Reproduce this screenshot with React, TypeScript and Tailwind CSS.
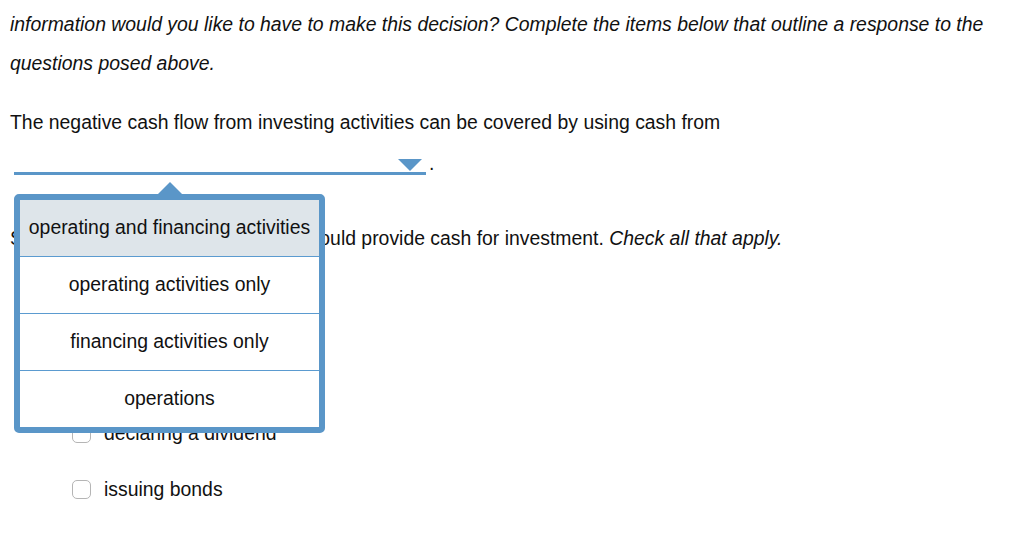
import React from "react";

const options = [
  "operating and financing activities",
  "operating activities only",
  "financing activities only",
  "operations",
];

const choices = ["issuing stock", "selling investments", "declaring a dividend", "issuing bonds"];

export default function App() {
  return (
    <div className="min-h-[546px] w-[1024px] bg-white pl-[10px] pt-[5px] text-[19.4px] text-[#111] [font-family:'Liberation_Sans',Arial,sans-serif]">
      <p className="leading-[39px] italic">
        information would you like to have to make this decision? Complete the items below that outline a response to the
        questions posed above.
      </p>

      <p className="mt-[20px] leading-[39px]">
        The negative cash flow from investing activities can be covered by using cash from
      </p>

      {/* dropdown */}
      <div className="relative mt-[4px] flex items-end">
        <div className="ml-[4px] flex h-[29px] w-[412px] items-start justify-end border-b-[3px] border-[#5a96c8] pr-[4px] pt-[13px]">
          <svg width="24" height="12" viewBox="0 0 24 12">
            <polygon points="0,0 24,0 12,12" fill="#5a96c8" />
          </svg>
        </div>
        <span className="mb-[2px] ml-[3px] leading-none">.</span>

        {/* popover */}
        <div className="absolute left-[4px] top-[36px] z-10 flex w-[311px] flex-col items-center">
          <svg width="26" height="13" viewBox="0 0 26 13" className="-mb-px">
            <polygon points="0,13 13,0 26,13" fill="#5a96c8" />
          </svg>
          <div className="w-full rounded-[5px] border-[6px] border-[#5a96c8] bg-white">
            {options.map((o, i) => (
              <div
                key={o}
                className={`flex items-center justify-center text-center ${
                  i < options.length - 1 ? "h-[57px] border-b border-[#5b9bd0]" : "h-[56px]"
                } ${i === 0 ? "bg-[#dee5ea]" : "bg-white"}`}
              >
                {o}
              </div>
            ))}
          </div>
        </div>
      </div>

      <p className="mt-[44px] leading-[39px]">
        Select the two activities listed that would provide cash for investment.{" "}
        <span className="italic">Check all that apply.</span>
      </p>

      <div className="mt-[44px] flex flex-col gap-[17px] pl-[62px]">
        {choices.map((c) => (
          <label key={c} className="flex h-[39px] items-center gap-[13px]">
            <span className="h-[19px] w-[19px] rounded-[5px] border border-[#b5b5b5] bg-white" />
            <span>{c}</span>
          </label>
        ))}
      </div>
    </div>
  );
}
